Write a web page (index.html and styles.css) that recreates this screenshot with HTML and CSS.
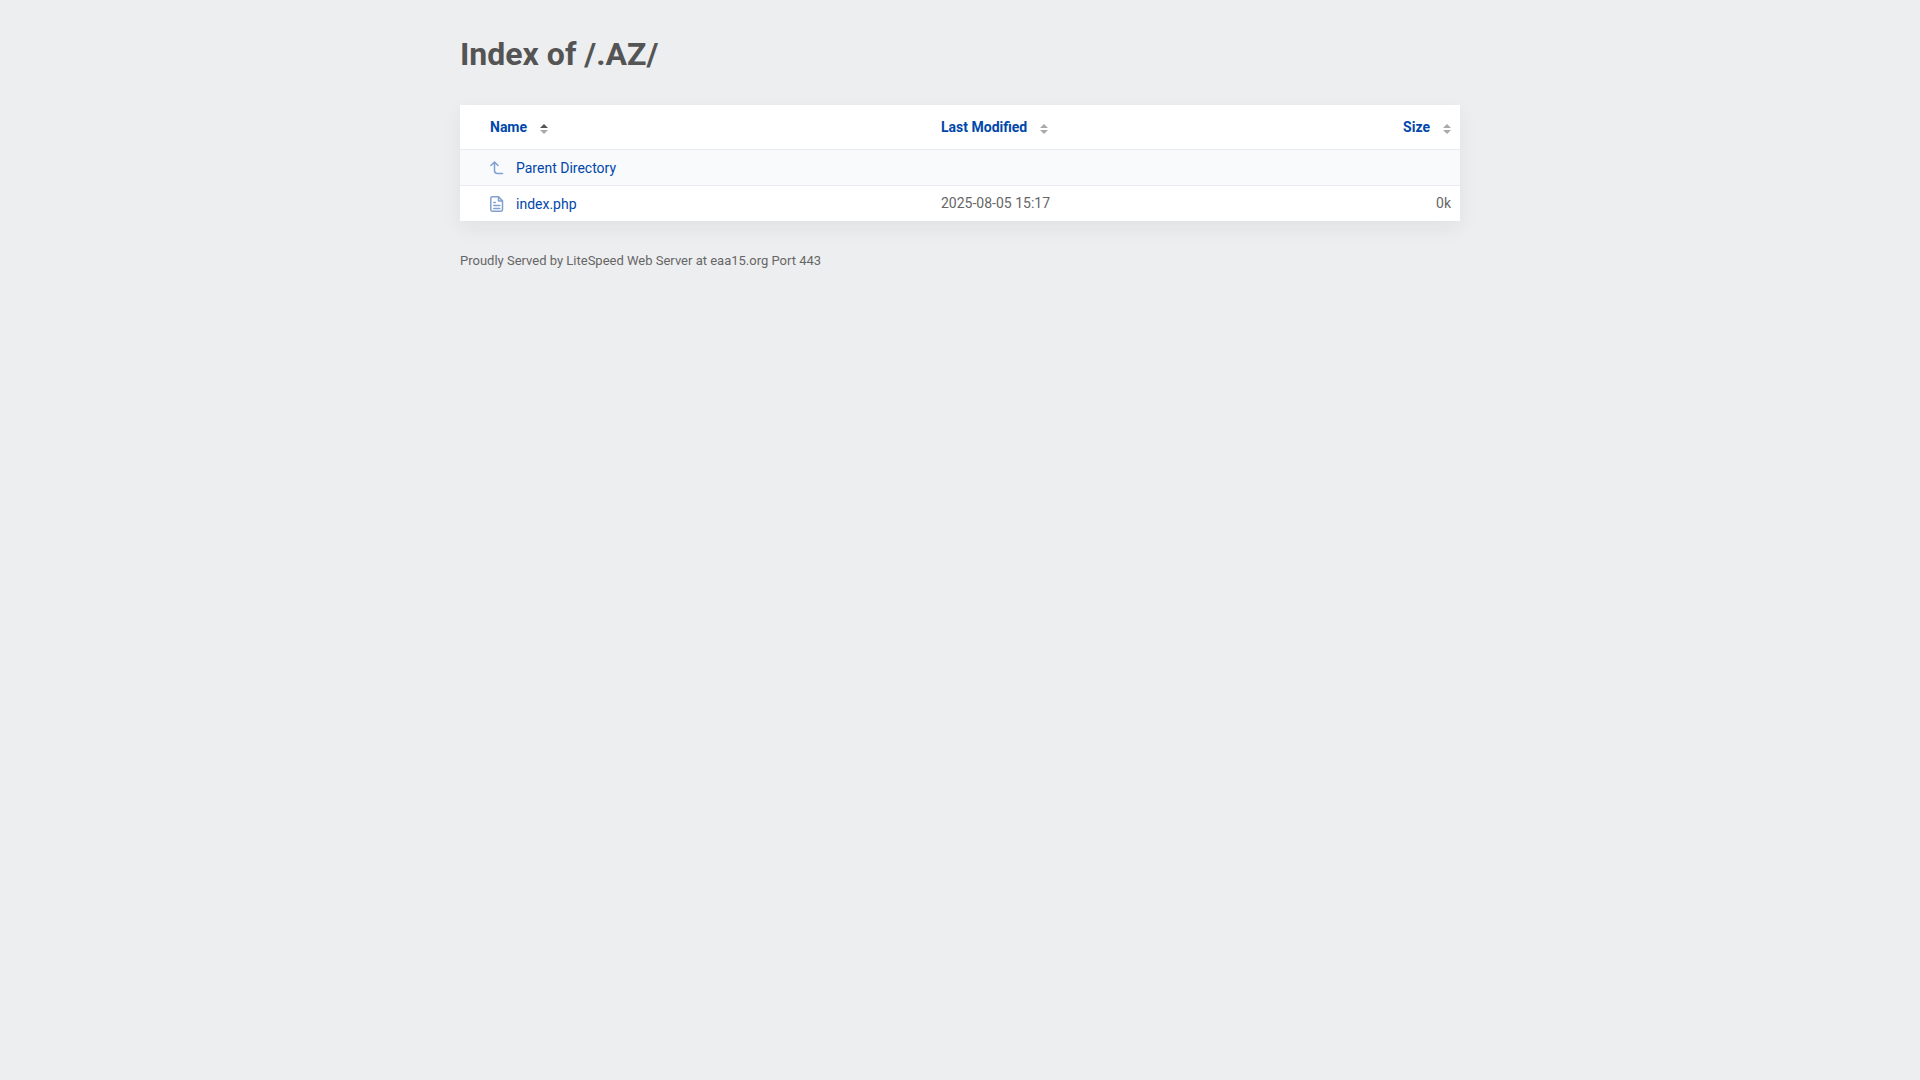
FILE: index.html
```html
<!DOCTYPE html>
<html lang="en">
<head>
<meta charset="utf-8">
<meta name="viewport" content="width=device-width, initial-scale=1">
<title>Index of /.AZ/</title>
<link rel="stylesheet" href="styles.css">
</head>
<body>
<main class="content">
  <h1 class="title">Index of /.AZ/</h1>
  <table class="listing">
    <thead>
      <tr>
        <th class="col-name" aria-sort="ascending"><button class="sort" type="button">Name<svg class="sort-icon" viewBox="0 0 8 10" aria-hidden="true"><path class="active" d="M0 4L4 0L8 4Z"/><path d="M0 6H8L4 10Z"/></svg></button></th>
        <th class="col-date"><button class="sort" type="button">Last Modified<svg class="sort-icon" viewBox="0 0 8 10" aria-hidden="true"><path d="M0 4L4 0L8 4Z"/><path d="M0 6H8L4 10Z"/></svg></button></th>
        <th class="col-size"><button class="sort" type="button">Size<svg class="sort-icon" viewBox="0 0 8 10" aria-hidden="true"><path d="M0 4L4 0L8 4Z"/><path d="M0 6H8L4 10Z"/></svg></button></th>
      </tr>
    </thead>
    <tbody>
      <tr class="parent">
        <td class="col-name"><a class="entry" href="../"><svg class="entry-icon" viewBox="0 0 14 16" aria-hidden="true"><path d="M1 5.500L4.500 2L8 5.500M4.500 2V10.500Q4.500 13.500 7.500 13.500H12.500"/></svg>Parent Directory</a></td>
        <td class="col-date"></td>
        <td class="col-size"></td>
      </tr>
      <tr>
        <td class="col-name"><a class="entry" href="index.php"><svg class="entry-icon" viewBox="0 0 14 16" aria-hidden="true"><path d="M2.200 0.800H8.500L12.500 4.800V13.800Q12.500 15.200 11.100 15.200H2.200Q0.800 15.200 0.800 13.800V2.200Q0.800 0.800 2.200 0.800ZM8.500 1V5H12.300M3.800 6.500H5.300M3.800 9.500H9.800M3.800 12.500H9.800"/></svg>index.php</a></td>
        <td class="col-date">2025-08-05 15:17</td>
        <td class="col-size">0k</td>
      </tr>
    </tbody>
  </table>
  <footer class="footer">Proudly Served by LiteSpeed Web Server at eaa15.org Port 443</footer>
</main>
</body>
</html>
```
FILE: styles.css
```css
* {
  box-sizing: border-box;
}

body {
  margin: 0;
  background: #edeef0;
  color: #666;
  font: 14px/20px Roboto, "Liberation Sans", sans-serif;
}

.content {
  max-width: 1000px;
  margin: 0 auto;
  padding: 32px 0;
}

.title {
  margin: 0 0 29px;
  color: #545454;
  font-size: 32px;
  line-height: 44px;
}

.listing {
  width: 100%;
  border-spacing: 0;
  background: #fff;
  box-shadow: 0 7px 20px 0 rgba(0, 40, 40, 0.06);
  table-layout: fixed;
}

th {
  height: 44px;
  padding: 0 9px;
  text-align: left;
}

td {
  height: 36px;
  padding: 0 9px 2px;
  border-top: 1px solid #e9ebee;
}

.parent {
  background: #f9fafc;
}

.col-name {
  width: 47.2%;
  padding-bottom: 0;
  padding-left: 30px;
}

.col-size {
  width: 15%;
  text-align: right;
}

.sort {
  display: inline-flex;
  align-items: center;
  gap: 13px;
  padding: 0;
  border: 0;
  background: none;
  color: #0047ab;
  font: inherit;
  cursor: pointer;
}

.sort-icon {
  width: 8px;
  height: 10px;
  margin-top: 4px;
  fill: #aaa;
}

.sort-icon .active {
  fill: #555;
}

.entry {
  display: flex;
  align-items: center;
  gap: 12px;
  color: #0047ab;
  text-decoration: none;
}

.entry-icon {
  width: 14px;
  height: 16px;
  fill: none;
  stroke: #80a0d0;
  stroke-width: 1.5;
  stroke-linecap: round;
  stroke-linejoin: round;
}

.footer {
  padding-top: 30px;
  font-size: 13px;
  line-height: 20px;
}
```
